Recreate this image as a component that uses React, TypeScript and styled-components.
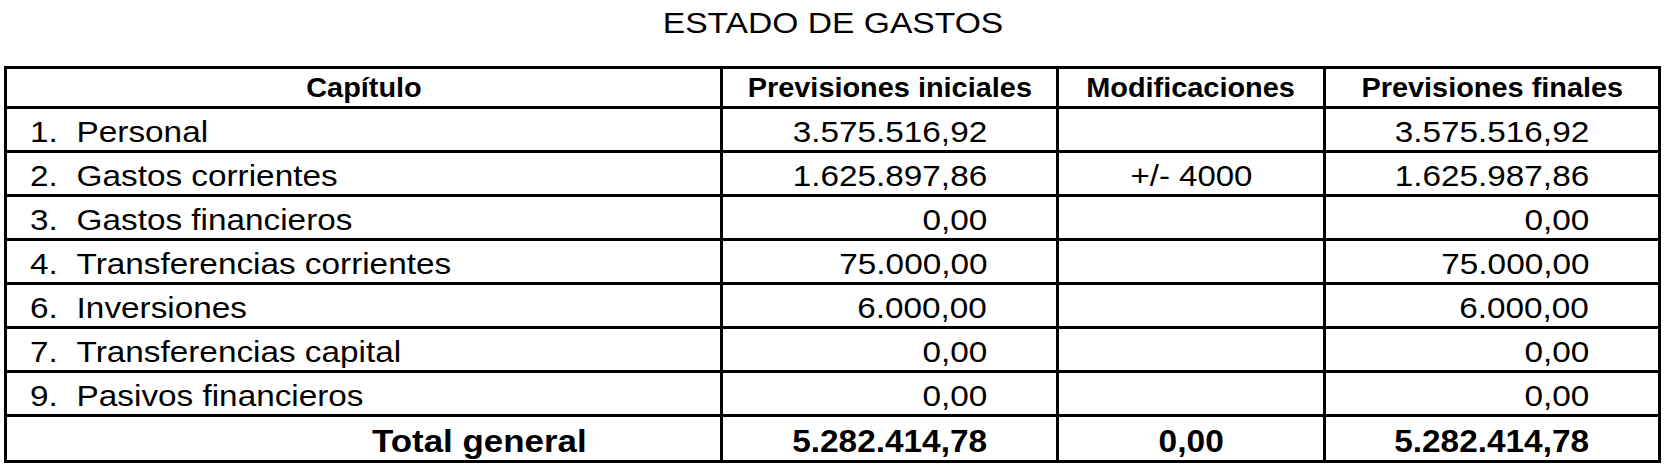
import React from "react";
import styled, { createGlobalStyle } from "styled-components";

const Global = createGlobalStyle`
  html, body { margin: 0; padding: 0; background: #fff; }
  body { font-family: "Liberation Sans", Arial, Helvetica, sans-serif; color: #000; }
  #root { width: 1668px; height: 476px; }
`;

const Page = styled.div`
  width: 1668px;
  height: 476px;
  box-sizing: border-box;
  padding: 0 7px 0 4px;
  overflow: hidden;
`;

const Title = styled.h1`
  margin: 0;
  height: 66px;
  box-sizing: border-box;
  padding-top: 7px;
  font-size: 30px;
  font-weight: normal;
  line-height: 32px;
  text-align: center;
`;

const Table = styled.table`
  width: 1657px;
  border-collapse: separate;
  border-spacing: 0;
  border: 3px solid #000;
  table-layout: fixed;
`;

const Col = styled.col<{ $w: number }>`
  width: ${(p) => p.$w}px;
`;

type Kind = "head" | "body" | "total";
type Align = "left" | "center" | "right";

const Row = styled.tr<{ $kind: Kind }>`
  height: ${(p) => (p.$kind === "head" ? 40 : p.$kind === "total" ? 43 : 44)}px;
`;

const Cell = styled.td<{ $kind: Kind; $align: Align; $last?: boolean; $indent?: number }>`
  box-sizing: border-box;
  vertical-align: top;
  white-space: nowrap;
  overflow: hidden;
  border-right: ${(p) => (p.$last ? "none" : "3px solid #000")};
  border-bottom: ${(p) => (p.$kind === "total" ? "none" : "3px solid #000")};
  text-align: ${(p) => p.$align};
  font-weight: ${(p) => (p.$kind === "body" ? "normal" : "bold")};
  font-size: ${(p) => (p.$kind === "head" ? 27 : p.$kind === "total" ? 31 : 30)}px;
  line-height: 30px;
  padding-top: ${(p) => (p.$kind === "head" ? 4 : p.$kind === "total" ? 10 : 8)}px;
  padding-bottom: 0;
  padding-right: ${(p) => (p.$align === "right" ? 69 : 0)}px;
  padding-left: ${(p) => (p.$align === "left" ? p.$indent ?? 23 : 0)}px;
`;

/* The source document renders its type a little wider than Arial; stretch glyphs to match. */
const Text = styled.span<{ $sx: number; $origin: Align }>`
  display: inline-block;
  transform: scaleX(${(p) => p.$sx});
  transform-origin: ${(p) => p.$origin} center;
`;

const Num = styled.span`
  display: inline-block;
  width: 42px;
`;

const rows = [
  { n: "1.", label: "Personal", ini: "3.575.516,92", mod: "", fin: "3.575.516,92" },
  { n: "2.", label: "Gastos corrientes", ini: "1.625.897,86", mod: "+/- 4000", fin: "1.625.987,86" },
  { n: "3.", label: "Gastos financieros", ini: "0,00", mod: "", fin: "0,00" },
  { n: "4.", label: "Transferencias corrientes", ini: "75.000,00", mod: "", fin: "75.000,00" },
  { n: "6.", label: "Inversiones", ini: "6.000,00", mod: "", fin: "6.000,00" },
  { n: "7.", label: "Transferencias capital", ini: "0,00", mod: "", fin: "0,00" },
  { n: "9.", label: "Pasivos financieros", ini: "0,00", mod: "", fin: "0,00" },
];

const headers = ["Capítulo", "Previsiones iniciales", "Modificaciones", "Previsiones finales"];

export default function App() {
  return (
    <Page>
      <Global />
      <Title>
        <Text $sx={1.12} $origin="center">ESTADO DE GASTOS</Text>
      </Title>
      <Table>
        <colgroup>
          <Col $w={716} />
          <Col $w={336} />
          <Col $w={267} />
          <Col $w={332} />
        </colgroup>
        <thead>
          <Row $kind="head">
            {headers.map((h, i) => (
              <Cell as="th" key={h} $kind="head" $align="center" $last={i === headers.length - 1}>
                <Text $sx={1.07} $origin="center">{h}</Text>
              </Cell>
            ))}
          </Row>
        </thead>
        <tbody>
          {rows.map((r) => (
            <Row $kind="body" key={r.n}>
              <Cell $kind="body" $align="left">
                <Text $sx={1.11} $origin="left">
                  <Num>{r.n}</Num>
                  {r.label}
                </Text>
              </Cell>
              <Cell $kind="body" $align="right">
                <Text $sx={1.11} $origin="right">{r.ini}</Text>
              </Cell>
              <Cell $kind="body" $align="center">
                {r.mod && <Text $sx={1.1} $origin="center">{r.mod}</Text>}
              </Cell>
              <Cell $kind="body" $align="right" $last>
                <Text $sx={1.11} $origin="right">{r.fin}</Text>
              </Cell>
            </Row>
          ))}
          <Row $kind="total">
            <Cell $kind="total" $align="left" $indent={365}>
              <Text $sx={1.126} $origin="left">Total general</Text>
            </Cell>
            <Cell $kind="total" $align="right">
              <Text $sx={1.076} $origin="right">5.282.414,78</Text>
            </Cell>
            <Cell $kind="total" $align="center">
              <Text $sx={1.08} $origin="center">0,00</Text>
            </Cell>
            <Cell $kind="total" $align="right" $last>
              <Text $sx={1.076} $origin="right">5.282.414,78</Text>
            </Cell>
          </Row>
        </tbody>
      </Table>
    </Page>
  );
}
